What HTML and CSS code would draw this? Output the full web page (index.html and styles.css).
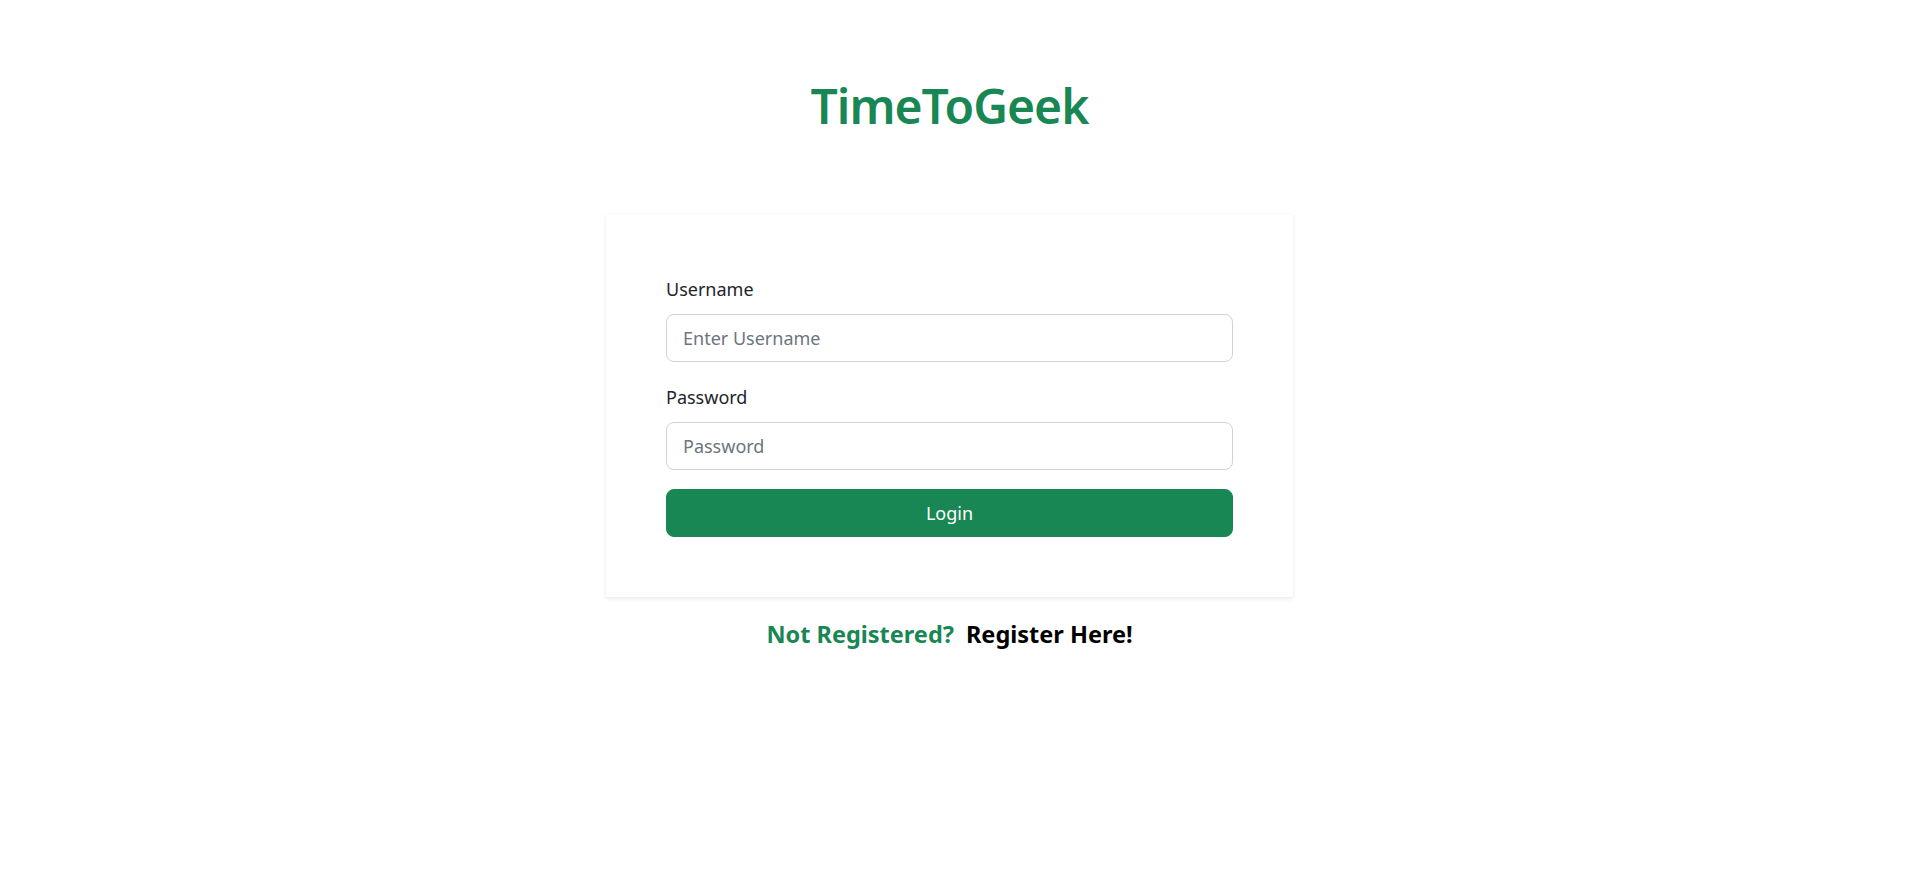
FILE: index.html
```html
<!DOCTYPE html>
<html lang="en">
<head>
<meta charset="utf-8">
<title>TimeToGeek - Login</title>
<link rel="stylesheet" href="styles.css">
</head>
<body>
<main class="page">
  <h1 class="brand">TimeToGeek</h1>
  <section class="card">
    <form class="login-form">
      <label class="form-label" for="username">Username</label>
      <input class="form-control" id="username" type="text" placeholder="Enter Username">
      <label class="form-label" for="password">Password</label>
      <input class="form-control" id="password" type="password" placeholder="Password">
      <button class="btn-login" type="button">Login</button>
    </form>
  </section>
  <p class="register-line"><span class="muted-green">Not Registered?</span><a class="register-link" href="#">Register Here!</a></p>
</main>
</body>
</html>
```

FILE: styles.css
```css
* { box-sizing: border-box; }

html, body {
  margin: 0;
  padding: 0;
  background: #ffffff;
}

body {
  font-family: "Noto Sans", "Open Sans", "DejaVu Sans", sans-serif;
  color: #212529;
}

.page {
  display: flex;
  flex-direction: column;
  align-items: center;
  padding-top: 76px;
  padding-right: 21px;
  padding-bottom: 290px;
}

.brand {
  margin: 0;
  font-size: 48px;
  line-height: 60px;
  font-weight: 600;
  color: #198754;
  letter-spacing: -1px;
}

.card {
  width: 687px;
  margin-top: 78px;
  padding: 60px;
  background: #fff;
  box-shadow: 0 2px 4px rgba(0, 0, 0, 0.075), 0 0 3px rgba(0, 0, 0, 0.04);
}

.login-form {
  display: flex;
  flex-direction: column;
}

.form-label {
  font-size: 18px;
  line-height: 30px;
  margin-bottom: 10px;
  color: #212529;
}

.form-control {
  height: 48px;
  padding: 0 16px;
  font-family: inherit;
  font-size: 18px;
  color: #212529;
  border: 1px solid #ced4da;
  border-radius: 8px;
  background: #fff;
  margin-bottom: 20px;
  outline: none;
}

.form-control::placeholder {
  color: #6c757d;
}

#password {
  margin-bottom: 19px;
}

.btn-login {
  height: 48px;
  font-family: inherit;
  font-size: 18px;
  color: #fff;
  background: #198754;
  border: 1px solid #198754;
  border-radius: 8px;
  cursor: pointer;
}

.register-line {
  margin: 22px 0 0;
  font-size: 23.5px;
  line-height: 30px;
  font-weight: 700;
  display: flex;
  gap: 12px;
}

.muted-green {
  color: #198754;
}

.register-link {
  color: #000;
  text-decoration: none;
}
```
